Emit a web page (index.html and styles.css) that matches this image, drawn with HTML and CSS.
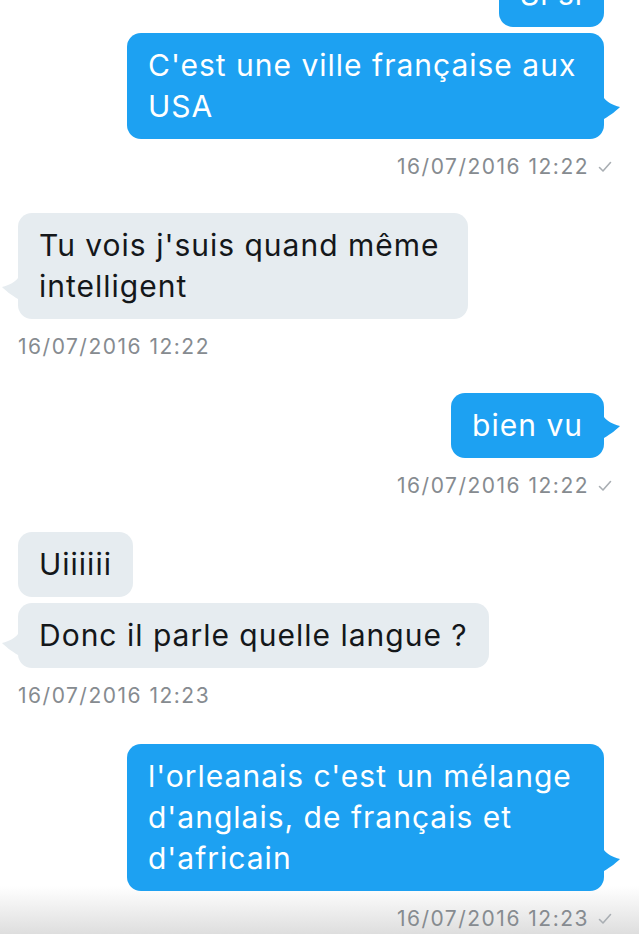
FILE: index.html
```html
<!DOCTYPE html>
<html lang="fr">
<head>
<meta charset="utf-8">
<title>Messages</title>
<link rel="stylesheet" href="styles.css">
</head>
<body>
<main class="chat">
  <section class="group out first">
    <div class="bubble out">Si si</div>
    <div class="bubble out">C'est une ville française aux USA<svg class="tail tail-out" viewBox="0 0 20 22" width="20" height="22"><path d="M0 0 L3 0 C6 4 11 7 19 9 C16 12 10 17 3 21 L0 21 Z"/></svg></div>
    <div class="meta out">16/07/2016 12:22<svg class="check" viewBox="0 0 14 12" width="14" height="12"><path d="M1.5 6.5 L5 10 L12.5 1.5"/></svg></div>
  </section>

  <section class="group in">
    <div class="bubble in">Tu vois j'suis quand même intelligent<svg class="tail tail-in" viewBox="0 0 20 22" width="20" height="22"><path d="M20 0 L17 0 C14 4 9 7 1 9 C4 12 10 17 17 21 L20 21 Z"/></svg></div>
    <div class="meta in">16/07/2016 12:22</div>
  </section>

  <section class="group out">
    <div class="bubble out">bien vu<svg class="tail tail-out" viewBox="0 0 20 22" width="20" height="22"><path d="M0 0 L3 0 C6 4 11 7 19 9 C16 12 10 17 3 21 L0 21 Z"/></svg></div>
    <div class="meta out">16/07/2016 12:22<svg class="check" viewBox="0 0 14 12" width="14" height="12"><path d="M1.5 6.5 L5 10 L12.5 1.5"/></svg></div>
  </section>

  <section class="group in">
    <div class="bubble in">Uiiiiii</div>
    <div class="bubble in single">Donc il parle quelle langue ?<svg class="tail tail-in low" viewBox="0 0 20 22" width="20" height="22"><path d="M20 0 L17 0 C14 4 9 7 1 9 C4 12 10 17 17 21 L20 21 Z"/></svg></div>
    <div class="meta in">16/07/2016 12:23</div>
  </section>

  <section class="group out last">
    <div class="bubble out">l'orleanais c'est un mélange d'anglais, de français et d'africain<svg class="tail tail-out" viewBox="0 0 20 22" width="20" height="22"><path d="M0 0 L3 0 C6 4 11 7 19 9 C16 12 10 17 3 21 L0 21 Z"/></svg></div>
    <div class="meta out">16/07/2016 12:23<svg class="check" viewBox="0 0 14 12" width="14" height="12"><path d="M1.5 6.5 L5 10 L12.5 1.5"/></svg></div>
  </section>
</main>
</body>
</html>
```

FILE: styles.css
```css
html {
  height: 100%;
  background: linear-gradient(to bottom, #ffffff 0, #ffffff 886px, #dedede 100%);
}
body {
  margin: 0;
  height: 100%;
  overflow: hidden;
  font-family: Inter, "Noto Sans", sans-serif;
  color: #14171a;
}
.chat {
  display: flex;
  flex-direction: column;
  gap: 34px;
  padding: 0 35px 0 18px;
}
.group {
  display: flex;
  flex-direction: column;
  gap: 6px;
}
.group.first {
  margin-top: -38px;
}
.group.last {
  margin-top: 2px;
}
.group.out {
  align-items: flex-end;
}
.group.in {
  align-items: flex-start;
}
.bubble {
  position: relative;
  box-sizing: border-box;
  padding: 12px 21px 12px 21px;
  border-radius: 14px;
  font-size: 30px;
  line-height: 41px;
  letter-spacing: 1px;
}
.bubble.out {
  background: #1da1f2;
  color: #ffffff;
  max-width: 477px;
}
.bubble.in {
  background: #e6ecf0;
  color: #14171a;
  max-width: 450px;
}
.bubble.single {
  max-width: none;
  white-space: nowrap;
}
.tail {
  position: absolute;
  bottom: 19px;
}
.tail.low {
  bottom: 12px;
}
.tail-out {
  right: -17px;
  fill: #1da1f2;
}
.tail-in {
  left: -17px;
  fill: #e6ecf0;
}
.meta {
  margin-top: 10px;
  display: flex;
  align-items: center;
  gap: 9px;
  font-size: 21px;
  line-height: 24px;
  letter-spacing: 1.5px;
  color: #868b90;
}
.meta.out {
  margin-right: -8px;
}
.check {
  fill: none;
  stroke: #a9aeb3;
  stroke-width: 1.6;
  stroke-linecap: round;
  stroke-linejoin: round;
}
```
